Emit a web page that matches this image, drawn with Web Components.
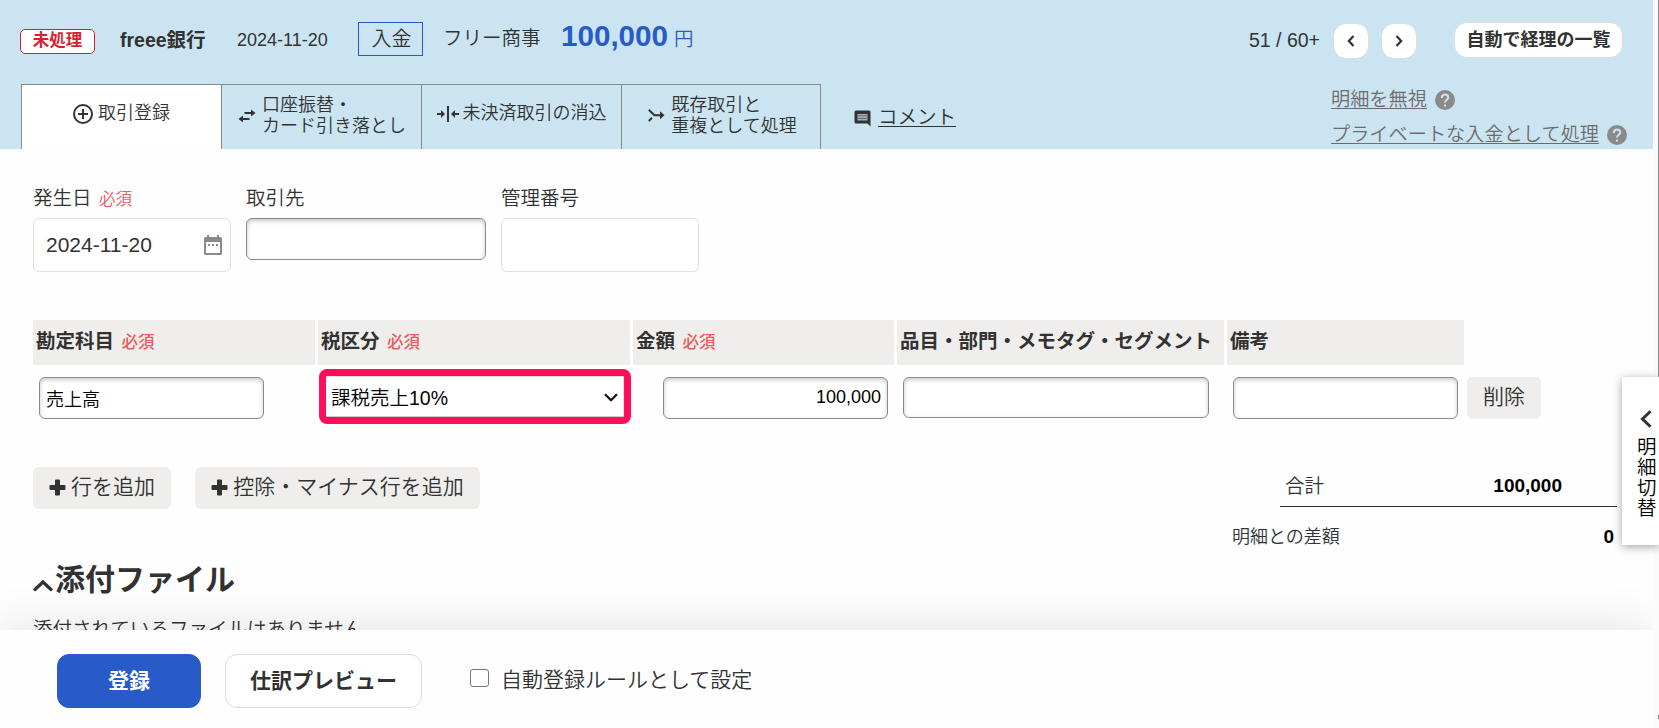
<!DOCTYPE html>
<html lang="ja">
<head>
<meta charset="utf-8">
<title>取引登録</title>
<style>
  html, body {
    margin: 0;
    height: 728px;
    overflow: hidden;
    background: #fefefe;
    color: #323232;
    font-family: "Liberation Sans", "Noto Sans CJK JP", sans-serif;
    font-size: 19.5px;
    font-weight: 350;
    line-height: 24px;
  }
</style>
</head>
<body>
<deal-page></deal-page>

<script>
const ICONS = {
  plusCircle: `<svg width="20" height="20" viewBox="0 0 20 20"><circle cx="10" cy="10" r="9" fill="none" stroke="#323232" stroke-width="2"/><path d="M10 5v10M5 10h10" stroke="#323232" stroke-width="2"/></svg>`,
  transfer: `<svg width="18" height="14" viewBox="0 0 18 14" fill="none" stroke="#323232" stroke-width="2"><path d="M6.500 4H14M4 10h7.500"/><path d="M13 .5L17.500 4 13 7.500zM5 6.500L.5 10 5 13.500z" fill="#323232" stroke="none"/></svg>`,
  match: `<svg width="22" height="16" viewBox="0 0 22 16" fill="none" stroke="#323232" stroke-width="2"><path d="M11 0v16M0 8h5M17 8h5"/><path d="M4 4l4 4-4 4zM18 4l-4 4 4 4z" fill="#323232" stroke="none"/></svg>`,
  merge: `<svg width="17" height="13" viewBox="0 0 17 13" fill="none" stroke="#323232" stroke-width="2"><path d="M.8 .8L6.400 6.300H13M.8 12l3.200-3.200"/><path d="M12 2.300l4.500 4-4.500 4z" fill="#323232" stroke="none"/></svg>`,
  comment: `<svg width="17" height="17" viewBox="0 0 17 17"><path d="M2 .5h13q1.500 0 1.500 1.500v14.500l-3-3H2Q.5 13.500.5 12V2Q.5.5 2 .5z" fill="#323232"/><path d="M3.500 4h10v6.500h-10z" fill="#a3b3bb"/><path d="M3.500 5.800h10M3.500 8.500h10" stroke="#5f696e"/></svg>`,
  help: `<svg width="20" height="20" viewBox="0 0 20 20"><circle cx="10" cy="10" r="10" fill="#8c8989"/><path d="M6.800 8Q6.800 4.500 10 4.500T13.200 7.500C13.200 9.800 10 9.800 10 12.600" fill="none" stroke="#cae5f1" stroke-width="2"/><path d="M9 14.500h2v2H9z" fill="#cae5f1"/></svg>`,
  left: `<svg width="8" height="12" viewBox="0 0 8 12"><path d="M6.500 1L1.800 6l4.700 5" fill="none" stroke="#323232" stroke-width="2.200"/></svg>`,
  right: `<svg width="8" height="12" viewBox="0 0 8 12"><path d="M1.500 1l4.700 5-4.700 5" fill="none" stroke="#323232" stroke-width="2.200"/></svg>`,
  bigLeft: `<svg width="12" height="18" viewBox="0 0 12 18"><path d="M10.500 1.200L2.500 9l8 7.800" fill="none" stroke="#323232" stroke-width="3"/></svg>`,
  up: `<svg width="20" height="13" viewBox="0 0 20 13"><path d="M2 10.500l8-7.500 8 7.500" fill="none" stroke="#323232" stroke-width="3.200" stroke-linecap="round"/></svg>`,
  down: `<svg width="14" height="9" viewBox="0 0 14 9"><path d="M1 1.200l6 6 6-6" fill="none" stroke="#111" stroke-width="2.200"/></svg>`,
  plus: `<svg width="17" height="17" viewBox="0 0 17 17"><path d="M6 1.500Q6 .5 7 .5h3q1 0 1 1V6h4.500q1 0 1 1v3q0 1-1 1H11v4.500q0 1-1 1H7q-1 0-1-1V11H1.500q-1 0-1-1V7q0-1 1-1H6z" fill="#323232"/></svg>`,
  calendar: `<svg width="18" height="20" viewBox="0 0 18 20"><path d="M3 0h2v2h8V0h2v2h1.500Q18 2 18 3.500v15q0 1.500-1.500 1.500h-15Q0 20 0 18.500v-15Q0 2 1.500 2H3zM2 7v11h14V7z" fill="#8c8989" fill-rule="evenodd"/><path d="M4 9h2v2H4zM8 9h2v2H8zM12 9h2v2h-2z" fill="#8c8989"/></svg>`,
};

class UiIcon extends HTMLElement {
  connectedCallback() {
    this.attachShadow({ mode: "open" });
    this.shadowRoot.innerHTML = `
      <style>
        :host { display: block; flex: none; line-height: 0; }
        svg { display: block; }
      </style>
      ${ICONS[this.getAttribute("name")]}
    `;
  }
}
customElements.define("ui-icon", UiIcon);

class UiButton extends HTMLElement {
  constructor() {
    super();
    this.attachShadow({ mode: "open" });
    this.shadowRoot.innerHTML = `
      <style>
        :host {
          display: flex;
          flex: none;
          box-sizing: border-box;
          align-items: center;
          justify-content: center;
          gap: 5px;
          height: 42px;
          padding-bottom: 2px;
          border-radius: 6px;
          background: #efeeec;
          font-size: 21px;
          white-space: nowrap;
        }
        :host([kind="round"]) {
          height: 36px;
          padding: 0;
          border: 1px solid #e1dcdc;
          border-radius: 13px;
          background: #fff;
          font-size: 18px;
          font-weight: 700;
        }
        :host([kind="primary"]), :host([kind="outline"]) {
          height: 54px;
          padding: 0 0 1px;
          border: 1px solid #dcdcdc;
          border-radius: 12px;
          background: #fff;
          font-weight: 700;
        }
        :host([kind="primary"]) {
          border-color: #285ac8;
          background: #285ac8;
          color: #fff;
        }
      </style>
      <slot></slot>
    `;
  }
}
customElements.define("ui-button", UiButton);

class RequiredMark extends HTMLElement {
  constructor() {
    super();
    this.attachShadow({ mode: "open" });
    this.shadowRoot.innerHTML = `
      <style>
        :host { display: inline; margin-left: 3px; font-size: 16.5px; color: #eb5a5f; }
      </style>
      必須
    `;
  }
}
customElements.define("required-mark", RequiredMark);

class TextBox extends HTMLElement {
  constructor() {
    super();
    this.attachShadow({ mode: "open" });
    this.shadowRoot.innerHTML = `
      <style>
        :host {
          display: flex;
          flex: none;
          box-sizing: border-box;
          align-items: center;
          height: 42px;
          padding: 3px 6px 0 6px;
          border: 1px solid #8c8989;
          border-radius: 6px;
          background: #fff;
          box-shadow: inset 0 2px 4px rgba(0, 0, 0, .22);
          color: #000;
          font-size: 18px;
        }
        :host([large]) {
          justify-content: space-between;
          height: 54px;
          padding: 0 8px 0 12px;
          border-color: #e1dfd7;
          box-shadow: none;
          color: #323232;
          font-size: 21px;
        }
        :host([number]) { justify-content: flex-end; padding-top: 0; padding-bottom: 2px; }
      </style>
      <slot></slot>
    `;
  }
}
customElements.define("text-box", TextBox);

class NavTab extends HTMLElement {
  constructor() {
    super();
    this.attachShadow({ mode: "open" });
    this.shadowRoot.innerHTML = `
      <style>
        :host {
          display: flex;
          box-sizing: border-box;
          width: 200px;
          height: 65px;
          align-items: center;
          justify-content: center;
          gap: 6px;
          padding: 0 0 5px 1px;
          border: solid #8c8989;
          border-width: 1px 0 0 1px;
          font-size: 18px;
          line-height: 21px;
        }
        :host([active]) { background: #fff; }
        :host(:last-of-type) { padding-left: 3px; border-right-width: 1px; }
        :host([icon="match"]), :host([icon="plusCircle"]) { gap: 4px; padding-left: 0; }
        :host([icon="plusCircle"]) { gap: 5px; }
        ui-icon { padding-top: 2px; }
        :host([icon="match"]) ui-icon, :host([icon="plusCircle"]) ui-icon { padding: 0 0 2px; }
        .label { padding-top: 2px; white-space: nowrap; }
        :host([icon="match"]) .label, :host([icon="plusCircle"]) .label { padding: 0 0 3px; }
      </style>
      <ui-icon name="${this.getAttribute("icon")}"></ui-icon>
      <div class="label"><slot></slot></div>
    `;
  }
}
customElements.define("nav-tab", NavTab);

class StatementHeader extends HTMLElement {
  constructor() {
    super();
    this.attachShadow({ mode: "open" });
    this.shadowRoot.innerHTML = `
      <style>
        :host {
          display: flex;
          box-sizing: border-box;
          flex-direction: column;
          justify-content: space-between;
          width: 1653px;
          height: 149px;
          background: #cae5f1;
        }
        .row { display: flex; align-items: flex-start; white-space: nowrap; }
        .info { padding: 22px 30px 0 20px; }
        .badge {
          box-sizing: border-box;
          width: 75px;
          height: 25px;
          margin: 7px 25px 0 0;
          border: 1px solid #dc1e32;
          border-radius: 5px;
          background: #fff;
          color: #dc1e32;
          font-size: 16.5px;
          font-weight: 700;
          line-height: 21px;
          text-align: center;
        }
        .bank { width: 117px; padding-top: 6px; font-weight: 700; }
        .date { width: 121px; padding-top: 6px; font-size: 18px; }
        .kind {
          box-sizing: border-box;
          width: 65px;
          height: 34px;
          margin-right: 20px;
          padding-left: 2px;
          border: 1px solid #285ac8;
          font-size: 20px;
          line-height: 32px;
          text-align: center;
        }
        .partner { width: 118px; padding-top: 4px; }
        .amount { color: #285ac8; font-size: 29.6px; font-weight: 700; line-height: 27px; }
        .yen { padding: 5px 0 0 6px; color: #285ac8; }
        .pager { margin-left: auto; padding-top: 6px; }
        .prev { width: 36px; margin: 1px 12px 0 13px; }
        .next { width: 36px; margin: 1px 37px 0 0; }
        .list { width: 169px; }
        .tabs { height: 65px; padding-left: 21px; }
        .comment { display: flex; gap: 7px; padding: 21px 0 0 33px; text-decoration: underline; text-decoration-thickness: 1px; text-underline-offset: 2px; }
        .comment ui-icon { padding-top: 5px; }
        .links {
          width: 322px;
          margin: -2px 0 0 auto;
          color: #6e6b6b;
          font-size: 19.2px;
          line-height: 35px;
        }
        .links div { display: flex; align-items: center; gap: 8px; }
        u { text-decoration-thickness: 1px; text-underline-offset: 2px; }
        .links ui-icon { padding-top: 1px; }
      </style>
      <div class="row info">
        <div class="badge">未処理</div>
        <div class="bank">freee銀行</div>
        <div class="date">2024-11-20</div>
        <div class="kind">入金</div>
        <div class="partner">フリー商事</div>
        <div class="amount">100,000</div>
        <div class="yen">円</div>
        <div class="pager">51 / 60+</div>
        <ui-button kind="round" class="prev"><ui-icon name="left"></ui-icon></ui-button>
        <ui-button kind="round" class="next"><ui-icon name="right"></ui-icon></ui-button>
        <ui-button kind="round" class="list">自動で経理の一覧</ui-button>
      </div>
      <div class="row tabs">
        <nav-tab icon="plusCircle" active>取引登録</nav-tab>
        <nav-tab icon="transfer">口座振替・<br>カード引き落とし</nav-tab>
        <nav-tab icon="match">未決済取引の消込</nav-tab>
        <nav-tab icon="merge">既存取引と<br>重複として処理</nav-tab>
        <div class="comment"><ui-icon name="comment"></ui-icon><span>コメント</span></div>
        <div class="links">
          <div><u>明細を無視</u><ui-icon name="help"></ui-icon></div>
          <div><u>プライベートな入金として処理</u><ui-icon name="help"></ui-icon></div>
        </div>
      </div>
    `;
  }
}
customElements.define("statement-header", StatementHeader);

class FormField extends HTMLElement {
  constructor() {
    super();
    this.attachShadow({ mode: "open" });
    this.shadowRoot.innerHTML = `
      <style>
        :host { display: block; }
        .label { box-sizing: border-box; height: 33px; padding-top: 1px; }
      </style>
      <div class="label"><slot name="label"></slot></div>
      <slot></slot>
    `;
  }
}
customElements.define("form-field", FormField);

class DealLines extends HTMLElement {
  constructor() {
    super();
    this.attachShadow({ mode: "open" });
    this.shadowRoot.innerHTML = `
      <style>
        :host { display: block; }
        .head, .line { display: grid; grid-template-columns: 282px 312px 261px 327px 237px 80px; column-gap: 3px; }
        .head div {
          height: 45px;
          padding-left: 3px;
          background: #efeeec;
          font-weight: 700;
          line-height: 43px;
          white-space: nowrap;
        }
        required-mark { font-weight: 500; }
        .line { align-items: start; padding-top: 4px; }
        .line > :not(.tax) { margin-top: 8px; }
        .account, .memo { width: 225px; margin-left: 6px; }
        .amount { width: 225px; margin-left: 30px; }
        .tags { width: 306px; height: 41px; margin-left: 6px; }
        .delete { width: 74px; }
        .tax {
          display: flex;
          box-sizing: border-box;
          align-items: center;
          justify-content: space-between;
          width: 312px;
          height: 55px;
          margin-left: 1px;
          padding: 1px 6px 0 5px;
          border: 7px solid #ff0f5a;
          border-radius: 8px;
          background: #fff;
          box-shadow: inset -1px 1px 0 #ddd, inset 0 -1px 0 #ccc;
          color: #000;
        }
        .tax span { padding-top: 1px; }
      </style>
      <div class="head">
        <div>勘定科目<required-mark></required-mark></div>
        <div>税区分<required-mark></required-mark></div>
        <div>金額<required-mark></required-mark></div>
        <div>品目・部門・メモタグ・セグメント</div>
        <div>備考</div>
      </div>
      <div class="line">
        <text-box class="account">売上高</text-box>
        <div class="tax"><span>課税売上10%</span><ui-icon name="down"></ui-icon></div>
        <text-box class="amount" number>100,000</text-box>
        <text-box class="tags"></text-box>
        <text-box class="memo"></text-box>
        <ui-button class="delete">削除</ui-button>
      </div>
    `;
  }
}
customElements.define("deal-lines", DealLines);

class DealTotals extends HTMLElement {
  constructor() {
    super();
    this.attachShadow({ mode: "open" });
    this.shadowRoot.innerHTML = `
      <style>
        :host { display: block; width: 385px; }
        div { display: flex; justify-content: space-between; }
        .sum {
          height: 32px;
          margin-left: 48px;
          padding: 0 55px 0 5px;
          border-bottom: 1px solid #323232;
        }
        .diff { padding: 18px 3px 0 0; font-size: 18px; }
        b { color: #000; font-size: 19px; font-weight: 700; }
      </style>
      <div class="sum"><span>合計</span><b>100,000</b></div>
      <div class="diff"><span>明細との差額</span><b>0</b></div>
    `;
  }
}
customElements.define("deal-totals", DealTotals);

class ActionBar extends HTMLElement {
  constructor() {
    super();
    this.attachShadow({ mode: "open" });
    this.shadowRoot.innerHTML = `
      <style>
        :host {
          position: absolute;
          left: 0;
          bottom: 0;
          display: flex;
          box-sizing: border-box;
          align-items: flex-start;
          width: 1653px;
          height: 98px;
          padding: 24px 57px;
          background: #fefefe;
          box-shadow: 0 0 50px rgba(0, 0, 0, .12);
        }
        .save { width: 144px; margin-right: 24px; }
        .preview { width: 197px; margin-right: 48px; }
        label { display: flex; padding-top: 14px; font-size: 21px; }
        input {
          appearance: none;
          box-sizing: border-box;
          width: 19px;
          height: 18px;
          margin: 1px 12px 0 0;
          border: 1.500px solid #767676;
          border-radius: 3px;
          background: #fff;
        }
      </style>
      <ui-button kind="primary" class="save">登録</ui-button>
      <ui-button kind="outline" class="preview">仕訳プレビュー</ui-button>
      <label><input type="checkbox">自動登録ルールとして設定</label>
    `;
  }
}
customElements.define("action-bar", ActionBar);

class StatementSwitch extends HTMLElement {
  constructor() {
    super();
    this.attachShadow({ mode: "open" });
    this.shadowRoot.innerHTML = `
      <style>
        :host {
          position: absolute;
          top: 377px;
          right: 0;
          box-sizing: border-box;
          width: 37px;
          height: 168px;
          padding: 33px 0 0 15px;
          background: #fff;
          box-shadow: 0 2px 9px rgba(0, 0, 0, .35);
          color: #000;
        }
        ui-icon { margin: 0 0 9px 3px; }
        span { display: block; width: 20px; line-height: 20.3px; word-break: break-all; }
      </style>
      <ui-icon name="bigLeft"></ui-icon>
      <span>明細切替</span>
    `;
  }
}
customElements.define("statement-switch", StatementSwitch);

class DealPage extends HTMLElement {
  constructor() {
    super();
    this.attachShadow({ mode: "open" });
    this.shadowRoot.innerHTML = `
      <style>
        :host {
          position: relative;
          display: block;
          width: 1659px;
          height: 728px;
          overflow: hidden;
        }
        /* scrollbar gutter */
        .gutter {
          position: absolute;
          top: 0;
          right: 0;
          box-sizing: border-box;
          width: 6px;
          height: 728px;
          background: linear-gradient(#8b8b8b, #8b8b8b) right top / 1px 377px no-repeat, linear-gradient(#8b8b8b, #8b8b8b) right 715px / 1px 4px no-repeat #fbfbfb;
        }
        main { padding: 36px 42px 0 33px; }
        .fields { display: flex; gap: 15px; height: 135px; }
        .small { width: 198px; }
        .partner { width: 240px; }
        .under { display: flex; justify-content: space-between; padding-top: 43px; height: 95px; }
        .actions { display: flex; gap: 24px; }
        .add { width: 138px; }
        .add-minus { width: 285px; }
        deal-totals { padding-top: 7px; }
        h2 { display: flex; align-items: center; gap: 2px; margin: 0; font-size: 30px; line-height: 36px; }
        h2 ui-icon { padding-top: 10px; }
        p { margin: 19px 0 0; }
      </style>
      <statement-header></statement-header>
      <main>
        <div class="fields">
          <form-field>
            <span slot="label">発生日<required-mark></required-mark></span>
            <text-box class="small" large>2024-11-20<ui-icon name="calendar"></ui-icon></text-box>
          </form-field>
          <form-field>
            <span slot="label">取引先</span>
            <text-box class="partner"></text-box>
          </form-field>
          <form-field>
            <span slot="label">管理番号</span>
            <text-box class="small" large></text-box>
          </form-field>
        </div>
        <deal-lines></deal-lines>
        <div class="under">
          <div class="actions">
            <ui-button class="add"><ui-icon name="plus"></ui-icon>行を追加</ui-button>
            <ui-button class="add-minus"><ui-icon name="plus"></ui-icon>控除・マイナス行を追加</ui-button>
          </div>
          <deal-totals></deal-totals>
        </div>
        <h2><ui-icon name="up"></ui-icon>添付ファイル</h2>
        <p>添付されているファイルはありません。</p>
      </main>
      <action-bar></action-bar>
      <div class="gutter"></div>
      <statement-switch></statement-switch>
    `;
  }
}
customElements.define("deal-page", DealPage);
</script>
</body>
</html>
